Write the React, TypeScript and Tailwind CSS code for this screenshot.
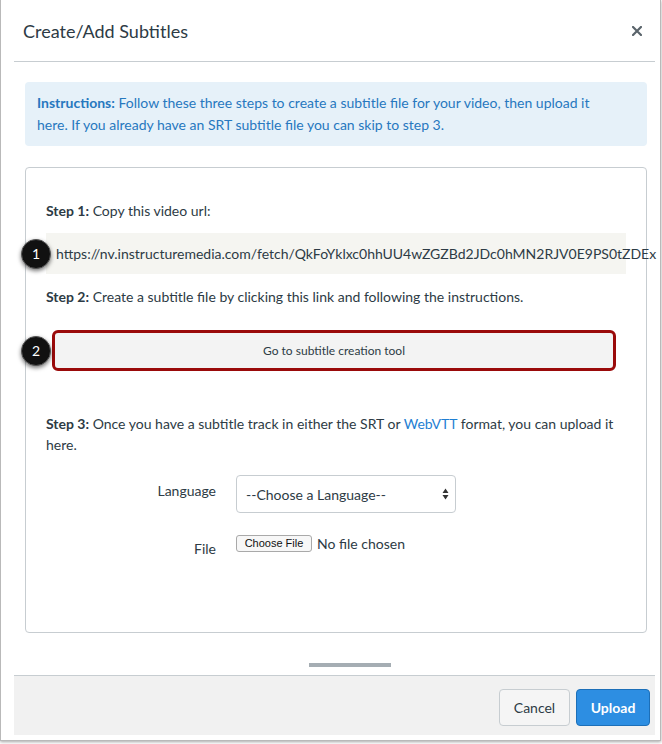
import React from "react";

const Badge = ({ n }: { n: string }) => (
  <div className="absolute left-[-25px] top-1/2 -translate-y-1/2 flex h-[30px] w-[30px] items-center justify-center rounded-full border border-[#555] bg-[#111] text-[14px] text-white shadow-[0_2px_4px_rgba(0,0,0,0.55)]">
    {n}
  </div>
);

export default function App() {
  return (
    <div className="h-[744px] w-[662px] overflow-hidden bg-white font-['Lato','Liberation_Sans',sans-serif] text-[#2d3b45]">
      <div className="flex h-[741px] w-[661px] flex-col overflow-hidden border-x border-b border-[#b9b9b9] bg-white pl-[13px] pr-[5px] shadow-[0_1px_3px_rgba(0,0,0,0.35)]">
        {/* header */}
        <div className="flex h-[62px] shrink-0 items-center justify-between border-b border-[#c7cdd1] pl-[9px] pr-[13px]">
          <h1 className="text-[18px] leading-none">Create/Add Subtitles</h1>
          <svg width="10" height="10" viewBox="0 0 10 10" className="text-[#5a646b]">
            <path d="M1 1 L9 9 M9 1 L1 9" stroke="currentColor" strokeWidth="2.2" strokeLinecap="square" />
          </svg>
        </div>

        {/* body */}
        <div className="flex flex-1 flex-col pl-[11px] pr-[8px] pt-[20px]">
          <div className="rounded-[4px] bg-[#e6f1f9] px-[12px] py-[10px] text-[14px] leading-[22px] text-[#2778bf]">
            <span className="font-bold">Instructions:</span> Follow these three steps to create a subtitle file for your video, then upload it
            <br />
            here. If you already have an SRT subtitle file you can skip to step 3.
          </div>

          <div className="mt-[21px] h-[466px] shrink-0 rounded-[4px] border border-[#c7cdd1] px-[20px] pt-[32px] text-[14px]">
            <p className="leading-[22px]">
              <span className="font-bold">Step 1:</span> Copy this video url:
            </p>
            <div className="relative mt-[11px] flex h-[41px] items-center bg-[#f5f5f1] pl-[10px]">
              <Badge n="1" />
              <span className="whitespace-nowrap">
                https://nv.instructuremedia.com/fetch/QkFoYklxc0hhUU4wZGZBd2JDc0hMN2RJV0E9PS0tZDEx
              </span>
            </div>
            <p className="mt-[12px] leading-[22px]">
              <span className="font-bold">Step 2:</span> Create a subtitle file by clicking this link and following the instructions.
            </p>
            <div className="relative ml-[6px] mr-[10px] mt-[22px]">
              <div className="absolute left-[-31px] top-1/2 -translate-y-1/2 flex h-[30px] w-[30px] items-center justify-center rounded-full border border-[#555] bg-[#111] text-[14px] text-white shadow-[0_2px_4px_rgba(0,0,0,0.55)]">
                2
              </div>
              <div className="flex h-[41px] items-center justify-center rounded-[6px] border-[3px] border-[#9a0a0a] bg-[#f3f3f3] text-[12px]">
                Go to subtitle creation tool
              </div>
            </div>
            <p className="mt-[42px] leading-[21px]">
              <span className="font-bold">Step 3:</span> Once you have a subtitle track in either the SRT or{" "}
              <span className="text-[#1f7fd3]">WebVTT</span> format, you can upload it
              <br />
              here.
            </p>

            <div className="mt-[20px] flex items-start gap-[20px]">
              <div className="w-[170px] pt-[5px] text-right leading-[22px]">Language</div>
              <div className="flex h-[38px] w-[220px] items-center justify-between rounded-[4px] border border-[#c7cdd1] bg-white pl-[9px] pr-[6px]">
                <span>--Choose a Language--</span>
                <svg width="7" height="12" viewBox="0 0 7 12" className="text-[#333]">
                  <path d="M3.5 0.5 L6.5 5 L0.5 5 Z M0.5 7 L6.5 7 L3.5 11.5 Z" fill="currentColor" />
                </svg>
              </div>
            </div>
            <div className="mt-[22px] flex items-start gap-[20px]">
              <div className="w-[170px] pt-[3px] text-right leading-[22px]">File</div>
              <div className="flex items-center gap-[5px]">
                <div className="flex h-[17px] w-[76px] items-center justify-center rounded-[3px] border border-[#a9a9a9] bg-[#f7f7f7] font-['Liberation_Sans',sans-serif] text-[11px] text-[#111]">
                  Choose File
                </div>
                <span className="leading-[16px]">No file chosen</span>
              </div>
            </div>
          </div>

          <div className="ml-[284px] mt-[30px] h-[4px] w-[82px] bg-[#a5adb3]" />
        </div>

        {/* footer */}
        <div className="flex h-[60px] shrink-0 items-start justify-end gap-[6px] border-t border-[#c7cdd1] bg-[#f1f1f1] pr-[5px] pt-[13px]">
          <button className="h-[37px] w-[71px] rounded-[4px] border border-[#c7cdd1] bg-[#f5f5f5] text-[14px] text-[#2d3b45]">
            Cancel
          </button>
          <button className="h-[37px] w-[74px] rounded-[4px] border border-[#1c6fb8] bg-[#2d8ee2] text-[14px] font-bold text-white">
            Upload
          </button>
        </div>
        <div className="h-[5px] shrink-0" />
      </div>
    </div>
  );
}
